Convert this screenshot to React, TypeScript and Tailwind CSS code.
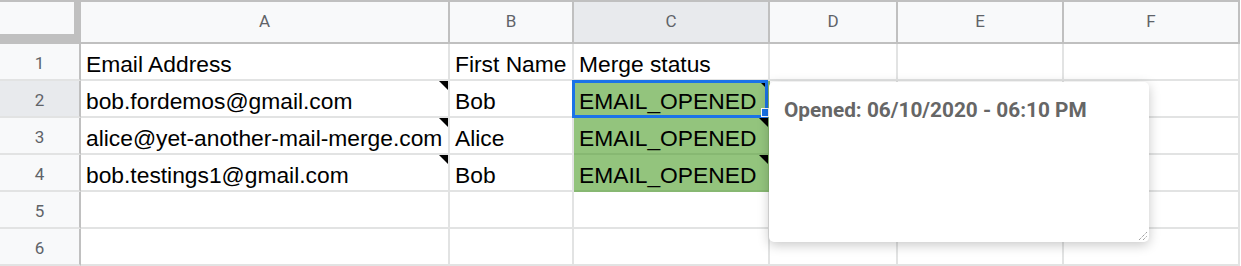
import React from "react";

const cols = [
  { key: "A", w: "w-[369px]" },
  { key: "B", w: "w-[124px]" },
  { key: "C", w: "w-[196px]" },
  { key: "D", w: "w-[128px]" },
  { key: "E", w: "w-[166px]" },
  { key: "F", w: "w-[176px]" },
];

type Cell = { text?: string; green?: boolean; tri?: boolean; selected?: boolean };

const rows: Cell[][] = [
  [{ text: "Email Address" }, { text: "First Name" }, { text: "Merge status" }, {}, {}, {}],
  [
    { text: "bob.fordemos@gmail.com", tri: true },
    { text: "Bob" },
    { text: "EMAIL_OPENED", green: true, tri: true, selected: true },
    {},
    {},
    {},
  ],
  [
    { text: "alice@yet-another-mail-merge.com", tri: true },
    { text: "Alice" },
    { text: "EMAIL_OPENED", green: true, tri: true },
    {},
    {},
    {},
  ],
  [
    { text: "bob.testings1@gmail.com", tri: true },
    { text: "Bob" },
    { text: "EMAIL_OPENED", green: true, tri: true },
    {},
    {},
    {},
  ],
  [{}, {}, {}, {}, {}, {}],
  [{}, {}, {}, {}, {}, {}],
];

export default function App() {
  return (
    <div className="relative w-[1241px] h-[266px] bg-white overflow-hidden">
      {/* header row */}
      <div className="flex h-[44px]">
        <div className="w-[81px] h-[44px] bg-[#c0c0c0] pt-[2px] shrink-0">
          <div className="w-[74px] h-[32px] bg-[#f8f9fa]" />
        </div>
        {cols.map((c) => (
          <div
            key={c.key}
            className={`${c.w} shrink-0 h-[44px] border-t-2 border-b-2 border-r-2 border-[#c0c0c0] flex items-center justify-center text-[17px] text-[#5f6368] ${
              c.key === "C" ? "bg-[#e8eaed]" : "bg-[#f8f9fa]"
            }`}
            style={{ fontFamily: "Roboto, Arial, sans-serif" }}
          >
            {c.key}
          </div>
        ))}
      </div>
      {rows.map((r, i) => (
        <div key={i} className="flex h-[37px]">
          <div
            className={`w-[81px] shrink-0 h-[37px] border-r-2 border-b-2 border-r-[#c0c0c0] border-b-[#e2e3e3] flex items-center justify-center pt-[4px] text-[17px] text-[#5f6368] ${
              i === 1 ? "bg-[#e8eaed]" : "bg-[#f8f9fa]"
            }`}
            style={{ fontFamily: "Roboto, Arial, sans-serif" }}
          >
            {i + 1}
          </div>
          {r.map((cell, j) => (
            <div
              key={j}
              className={`${cols[j].w} shrink-0 h-[37px] relative border-r-2 border-b-2 flex items-end pb-[2px] pl-[5px] leading-[26px] text-[22.8px] text-black whitespace-nowrap ${
                cell.green ? "bg-[#93c47d] border-[#87b872]" : "bg-white border-[#e2e3e3]"
              }`}
              style={{ fontFamily: '"Liberation Sans", Arial, sans-serif' }}
            >
              {cell.text}
              {cell.tri && (
                <div className="absolute top-0 right-0 w-0 h-0 border-l-[9px] border-l-transparent border-t-[9px] border-t-black" />
              )}
              {cell.selected && (
                <>
                  <div className="absolute left-[-2px] top-[-1px] w-[196px] h-[38px] border-[3px] border-[#1a73e8] pointer-events-none" />
                  <div className="absolute left-[187px] top-[27px] w-[8px] h-[9px] bg-[#1a73e8] border border-white" />
                </>
              )}
            </div>
          ))}
        </div>
      ))}
      {/* note popup */}
      <div className="absolute left-[769px] top-[82px] w-[380px] h-[160px] bg-white rounded-[5px] shadow-[0_3px_12px_rgba(0,0,0,0.22)] pl-[15px] pt-[16px]">
        <div
          className="text-[20.8px] leading-[24px] font-bold text-[#666666]"
          style={{ fontFamily: "Roboto, Arial, sans-serif" }}
        >
          Opened: 06/10/2020 - 06:10 PM
        </div>
        <svg
          className="absolute right-[1px] bottom-[1px]"
          width="10"
          height="10"
          viewBox="0 0 10 10"
        >
          <line x1="1" y1="9" x2="9" y2="1" stroke="#777" strokeWidth="1" strokeDasharray="1 1" />
          <line x1="5" y1="9" x2="9" y2="5" stroke="#777" strokeWidth="1" strokeDasharray="1 1" />
        </svg>
      </div>
    </div>
  );
}
